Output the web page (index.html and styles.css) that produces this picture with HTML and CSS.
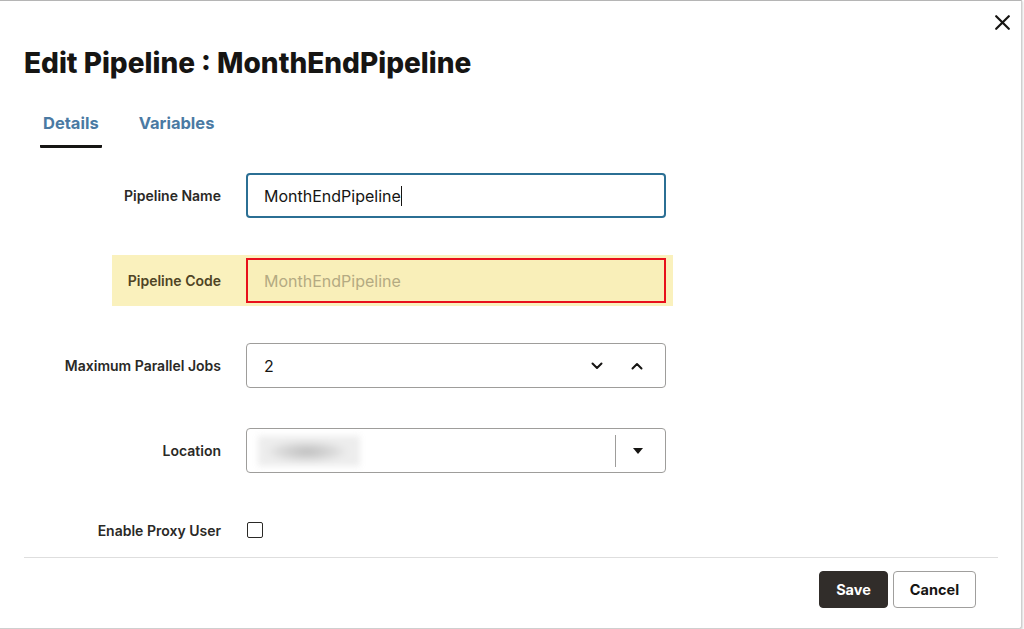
FILE: index.html
```html
<!DOCTYPE html>
<html lang="en">
<head>
    <meta charset="UTF-8">
    <meta name="viewport" content="width=device-width, initial-scale=1.0">
    <title>Edit Pipeline</title>
    <link rel="stylesheet" href="styles.css">
</head>
<body>
    <div class="dialog">
        <div class="dialog-header">
            <h1 class="title">Edit Pipeline : MonthEndPipeline</h1>
            <button class="close-btn" aria-label="Close">
                <svg width="15" height="15" viewBox="0 0 15 15">
                    <path d="M1.2 1.2 L13.8 13.8 M13.8 1.2 L1.2 13.8" stroke="#161513" stroke-width="2.2" stroke-linecap="round"/>
                </svg>
            </button>
        </div>

        <div class="tabs">
            <div class="tab active">Details</div>
            <div class="tab">Variables</div>
        </div>

        <div class="form">
            <div class="row">
                <label class="label">Pipeline Name</label>
                <div class="field focused">MonthEndPipeline<span class="caret"></span></div>
            </div>

            <div class="row highlight">
                <label class="label">Pipeline Code</label>
                <div class="field invalid">MonthEndPipeline</div>
            </div>

            <div class="row">
                <label class="label">Maximum Parallel Jobs</label>
                <div class="field">
                    <span class="value">2</span>
                    <span class="spin">
                        <svg width="12" height="8" viewBox="0 0 12 8"><path d="M1.5 1.5 L6 6 L10.5 1.5" fill="none" stroke="#161513" stroke-width="2" stroke-linecap="round" stroke-linejoin="round"/></svg>
                    </span>
                    <span class="spin">
                        <svg width="12" height="8" viewBox="0 0 12 8"><path d="M1.5 6.5 L6 2 L10.5 6.5" fill="none" stroke="#161513" stroke-width="2" stroke-linecap="round" stroke-linejoin="round"/></svg>
                    </span>
                </div>
            </div>

            <div class="row">
                <label class="label">Location</label>
                <div class="field select">
                    <span class="value"><span class="blurred"></span></span>
                    <span class="divider"></span>
                    <span class="drop">
                        <svg width="10" height="6" viewBox="0 0 10 6"><path d="M0 0 L10 0 L5 6 Z" fill="#161513"/></svg>
                    </span>
                </div>
            </div>

            <div class="row check-row">
                <label class="label">Enable Proxy User</label>
                <span class="checkbox"></span>
            </div>
        </div>

        <div class="footer">
            <button class="btn primary">Save</button>
            <button class="btn secondary">Cancel</button>
        </div>
    </div>
</body>
</html>
```

FILE: styles.css
```css
body {
    margin: 0;
    background-color: #fff;
    font-family: 'Inter', 'Noto Sans', sans-serif;
    color: #161513;
}

.dialog {
    width: 1021px;
    height: 627px;
    border-top: 1px solid #b5b5b5;
    border-right: 1px solid #cfcfcf;
    border-bottom: 1px solid #cfcfcf;
    border-bottom-right-radius: 3px;
    box-shadow: 1px 1px 2px rgba(0, 0, 0, 0.15);
    background-color: #fff;
    display: flex;
    flex-direction: column;
}

.dialog-header {
    display: flex;
    justify-content: space-between;
    align-items: flex-start;
    padding: 0 9px 0 24px;
}

.title {
    margin: 44px 0 0;
    font-size: 28px;
    font-weight: 800;
    line-height: 36px;
}

.close-btn {
    margin-top: 11px;
    padding: 0;
    width: 20px;
    height: 20px;
    border: none;
    background: none;
    display: flex;
    align-items: center;
    justify-content: center;
    cursor: pointer;
}

.tabs {
    display: flex;
    gap: 34px;
    margin: 28px 0 0 40px;
}

.tab {
    padding: 0 3px;
    height: 36px;
    font-size: 16.5px;
    font-weight: 700;
    line-height: 28px;
    color: #4a7aa3;
    border-bottom: 3px solid transparent;
}

.tab.active {
    border-bottom-color: #161513;
    border-radius: 1px;
}

.form {
    display: flex;
    flex-direction: column;
    gap: 40px;
    margin-top: 25px;
}

.row {
    display: grid;
    grid-template-columns: 221px 420px;
    column-gap: 25px;
    align-items: center;
}

.row.highlight {
    margin: -3px 0 -3px 112px;
    width: fit-content;
    grid-template-columns: 109px 420px;
    padding: 3px 7px 3px 0;
    background-color: #faf1bd;
}

.label {
    text-align: right;
    font-size: 14px;
    font-weight: 600;
    color: #2a2926;
}

.highlight .label {
    color: #4f4424;
}

.field {
    box-sizing: border-box;
    height: 45px;
    border: 1px solid #9e9d9b;
    border-radius: 4px;
    padding: 0 16px 0 17px;
    display: flex;
    align-items: center;
    font-size: 16px;
}

.field.focused {
    border: 2px solid #2b6f94;
    padding-left: 16px;
}

.field.invalid {
    border: 2px solid #e8101b;
    border-radius: 0;
    background-color: #f9efb9;
    color: #b4aa82;
    padding-left: 16px;
}

.caret {
    display: inline-block;
    width: 1px;
    height: 20px;
    background-color: #161513;
}

.field .value {
    flex: 1;
}

.spin {
    width: 24px;
    display: flex;
    justify-content: center;
    margin-left: 16px;
}

.spin:first-of-type {
    margin-left: 0;
}

.select {
    padding: 0 22px 0 11px;
}

.blurred {
    display: block;
    width: 102px;
    height: 30px;
    background: radial-gradient(ellipse 42px 11px at 48% 52%, #bdbdbd, #dcdcdc 70%, #ededed);
    filter: blur(3px);
}

.divider {
    width: 1px;
    height: 32px;
    background-color: #9e9d9b;
    margin-right: 17px;
}

.drop {
    display: flex;
}

.check-row {
    height: 34px;
}

.checkbox {
    box-sizing: border-box;
    width: 16px;
    height: 16px;
    margin-left: 1px;
    border: 1.5px solid #2a2926;
    border-radius: 2px;
}

.footer {
    margin: 10px 23px 0 24px;
    padding: 13px 22px 0 0;
    border-top: 1px solid #dedede;
    display: flex;
    justify-content: flex-end;
    gap: 5px;
}

.btn {
    height: 37px;
    padding: 0;
    border: 1px solid #a09f9d;
    border-radius: 4px;
    background-color: #fff;
    color: #161513;
    font-family: 'Inter', sans-serif;
    font-size: 14.5px;
    font-weight: 700;
    cursor: pointer;
}

.btn.primary {
    width: 69px;
    background-color: #312d2a;
    border-color: #312d2a;
    color: #fff;
}

.btn.secondary {
    width: 83px;
}
```
